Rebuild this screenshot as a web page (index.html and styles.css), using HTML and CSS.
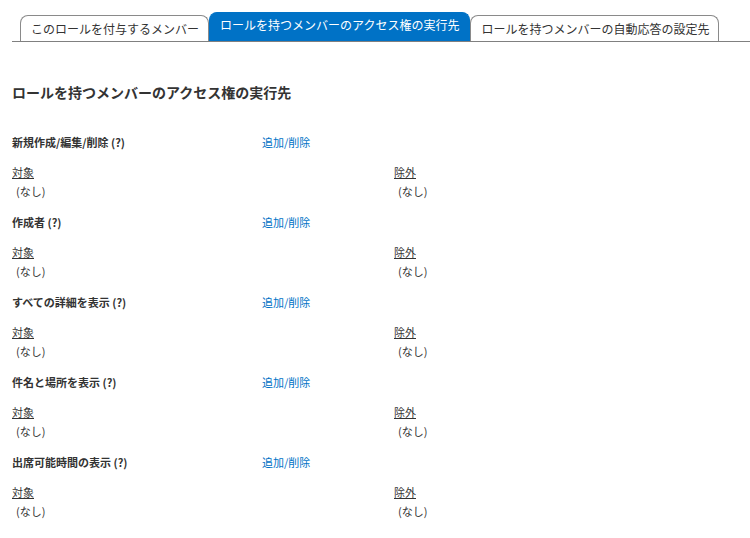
FILE: index.html
```html
<!DOCTYPE html>
<html lang="ja">
<head>
<meta charset="utf-8">
<title>ロールを持つメンバーのアクセス権の実行先</title>
<link rel="stylesheet" href="styles.css">
</head>
<body>
<div class="tabs">
  <div class="tab">このロールを付与するメンバー</div>
  <div class="tab active">ロールを持つメンバーのアクセス権の実行先</div>
  <div class="tab">ロールを持つメンバーの自動応答の設定先</div>
</div>
<div class="content">
  <h1 class="title">ロールを持つメンバーのアクセス権の実行先</h1>

  <div class="section">
    <div class="head"><span class="label">新規作成/編集/削除 (?)</span><a class="link" href="#">追加/削除</a></div>
    <div class="cols">
      <div><div class="sub">対象</div><div class="none">(なし)</div></div>
      <div><div class="sub">除外</div><div class="none">(なし)</div></div>
    </div>
  </div>

  <div class="section">
    <div class="head"><span class="label">作成者 (?)</span><a class="link" href="#">追加/削除</a></div>
    <div class="cols">
      <div><div class="sub">対象</div><div class="none">(なし)</div></div>
      <div><div class="sub">除外</div><div class="none">(なし)</div></div>
    </div>
  </div>

  <div class="section">
    <div class="head"><span class="label">すべての詳細を表示 (?)</span><a class="link" href="#">追加/削除</a></div>
    <div class="cols">
      <div><div class="sub">対象</div><div class="none">(なし)</div></div>
      <div><div class="sub">除外</div><div class="none">(なし)</div></div>
    </div>
  </div>

  <div class="section">
    <div class="head"><span class="label">件名と場所を表示 (?)</span><a class="link" href="#">追加/削除</a></div>
    <div class="cols">
      <div><div class="sub">対象</div><div class="none">(なし)</div></div>
      <div><div class="sub">除外</div><div class="none">(なし)</div></div>
    </div>
  </div>

  <div class="section">
    <div class="head"><span class="label">出席可能時間の表示 (?)</span><a class="link" href="#">追加/削除</a></div>
    <div class="cols">
      <div><div class="sub">対象</div><div class="none">(なし)</div></div>
      <div><div class="sub">除外</div><div class="none">(なし)</div></div>
    </div>
  </div>
</div>
</body>
</html>
```
FILE: styles.css
```css
html, body {
  margin: 0;
  padding: 0;
  background: #ffffff;
}
body {
  font-family: "Noto Sans CJK JP", "Noto Sans", sans-serif;
  color: #333333;
  font-size: 11px;
}
.tabs {
  display: flex;
  align-items: flex-end;
  margin-left: 12px;
  padding-left: 8px;
  padding-top: 12px;
  height: 29px;
  border-bottom: 1px solid #808080;
}
.tab {
  font-size: 12px;
  line-height: 16px;
  padding: 5px 9px 4px 10px;
  border: 1px solid #8a8a8a;
  border-bottom: none;
  border-radius: 8px 8px 0 0;
  background: #ffffff;
  color: #333333;
  white-space: nowrap;
}
.tab.active {
  background: #0072c6;
  border-color: #0072c6;
  color: #ffffff;
  padding: 4px 10px 8px 10px;
}
.content {
  padding: 0 12px;
}
.title {
  margin: 40px 0 30px 0;
  font-size: 14px;
  line-height: 20px;
  font-weight: bold;
  color: #333333;
}
.section {
  margin-bottom: 12px;
}
.head {
  display: grid;
  grid-template-columns: 250px auto;
  line-height: 20px;
  margin-bottom: 10px;
}
.label {
  font-weight: bold;
}
.link {
  color: #0072c6;
  text-decoration: none;
}
.cols {
  display: grid;
  grid-template-columns: 382px auto;
}
.sub {
  line-height: 20px;
  text-decoration: underline;
}
.none {
  line-height: 18px;
  padding-left: 4px;
}
```
